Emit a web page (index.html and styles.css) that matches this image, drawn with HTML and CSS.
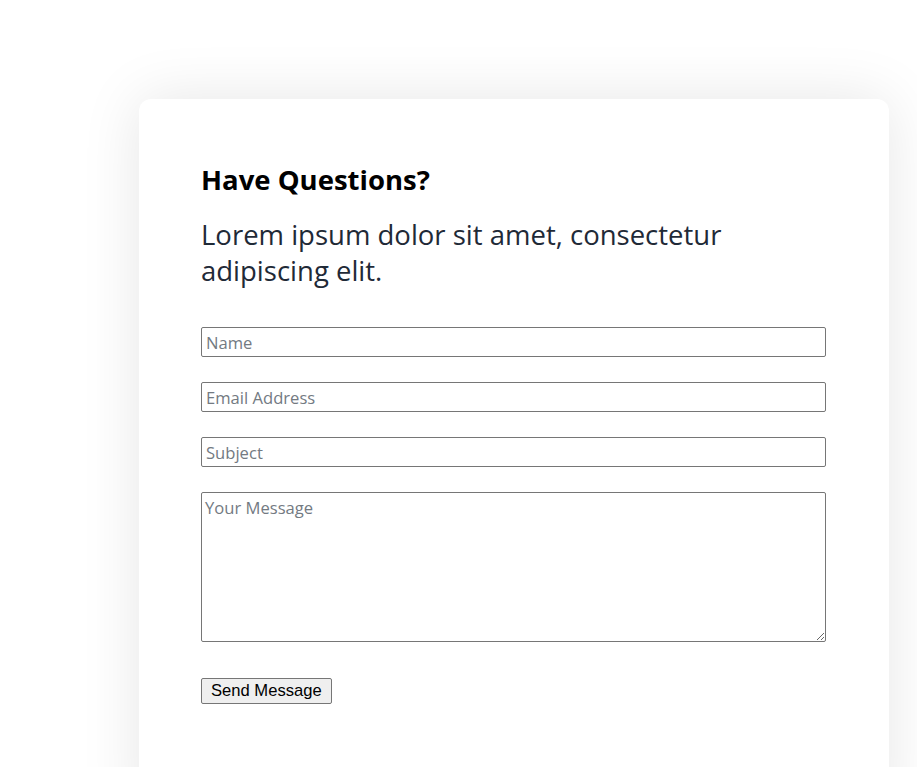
FILE: index.html
```html
<!DOCTYPE html>
<html lang="en">
<head>
<meta charset="utf-8">
<title>Contact</title>
<link rel="stylesheet" href="styles.css">
</head>
<body>
<div class="page">
  <section class="card">
    <h2 class="title">Have Questions?</h2>
    <p class="lead">Lorem ipsum dolor sit amet, consectetur adipiscing elit.</p>
    <form class="form">
      <input class="field" type="text" placeholder="Name">
      <input class="field" type="email" placeholder="Email Address">
      <input class="field" type="text" placeholder="Subject">
      <textarea class="field area" placeholder="Your Message"></textarea>
      <div><button class="send" type="button">Send Message</button></div>
    </form>
  </section>
</div>
</body>
</html>
```
FILE: styles.css
```css
html, body {
  margin: 0;
  padding: 0;
  background: #ffffff;
}
body {
  font-family: "Open Sans", "Noto Sans", sans-serif;
  overflow: hidden;
}
.page {
  padding: 99px 0 0 139px;
}
.card {
  width: 750px;
  box-sizing: border-box;
  padding: 62px 63px 62px 62px;
  background: #ffffff;
  border-radius: 12px;
  box-shadow: 0 0 60px rgba(0, 0, 0, 0.1);
  min-height: 720px;
}
.title {
  margin: 0;
  font-size: 27.5px;
  font-weight: 700;
  color: #000;
  line-height: 1.362;
}
.lead {
  margin: 19px 0 0;
  font-size: 27.5px;
  line-height: 36px;
  color: #1f2a37;
  font-weight: 400;
}
.form {
  margin-top: 38px;
  display: flex;
  flex-direction: column;
  gap: 25px;
}
.field {
  display: block;
  width: 625px;
  height: 30px;
  box-sizing: border-box;
  margin: 0;
  padding: 2px 4px;
  border: 1px solid #767676;
  border-radius: 2px;
  font-family: "Open Sans", sans-serif;
  font-size: 16.6px;
  color: #000;
}
.field::placeholder {
  color: #737a82;
}
.area {
  height: 150px;
  padding: 3px 3px;
  resize: both;
}
.send {
  margin-top: 11px;
  font-family: Arial, "Liberation Sans", sans-serif;
  font-size: 16.6px;
  padding: 1px 9px;
  height: 26px;
  border: 1px solid #767676;
  border-radius: 2px;
  background: #efefef;
  color: #000;
}
```
